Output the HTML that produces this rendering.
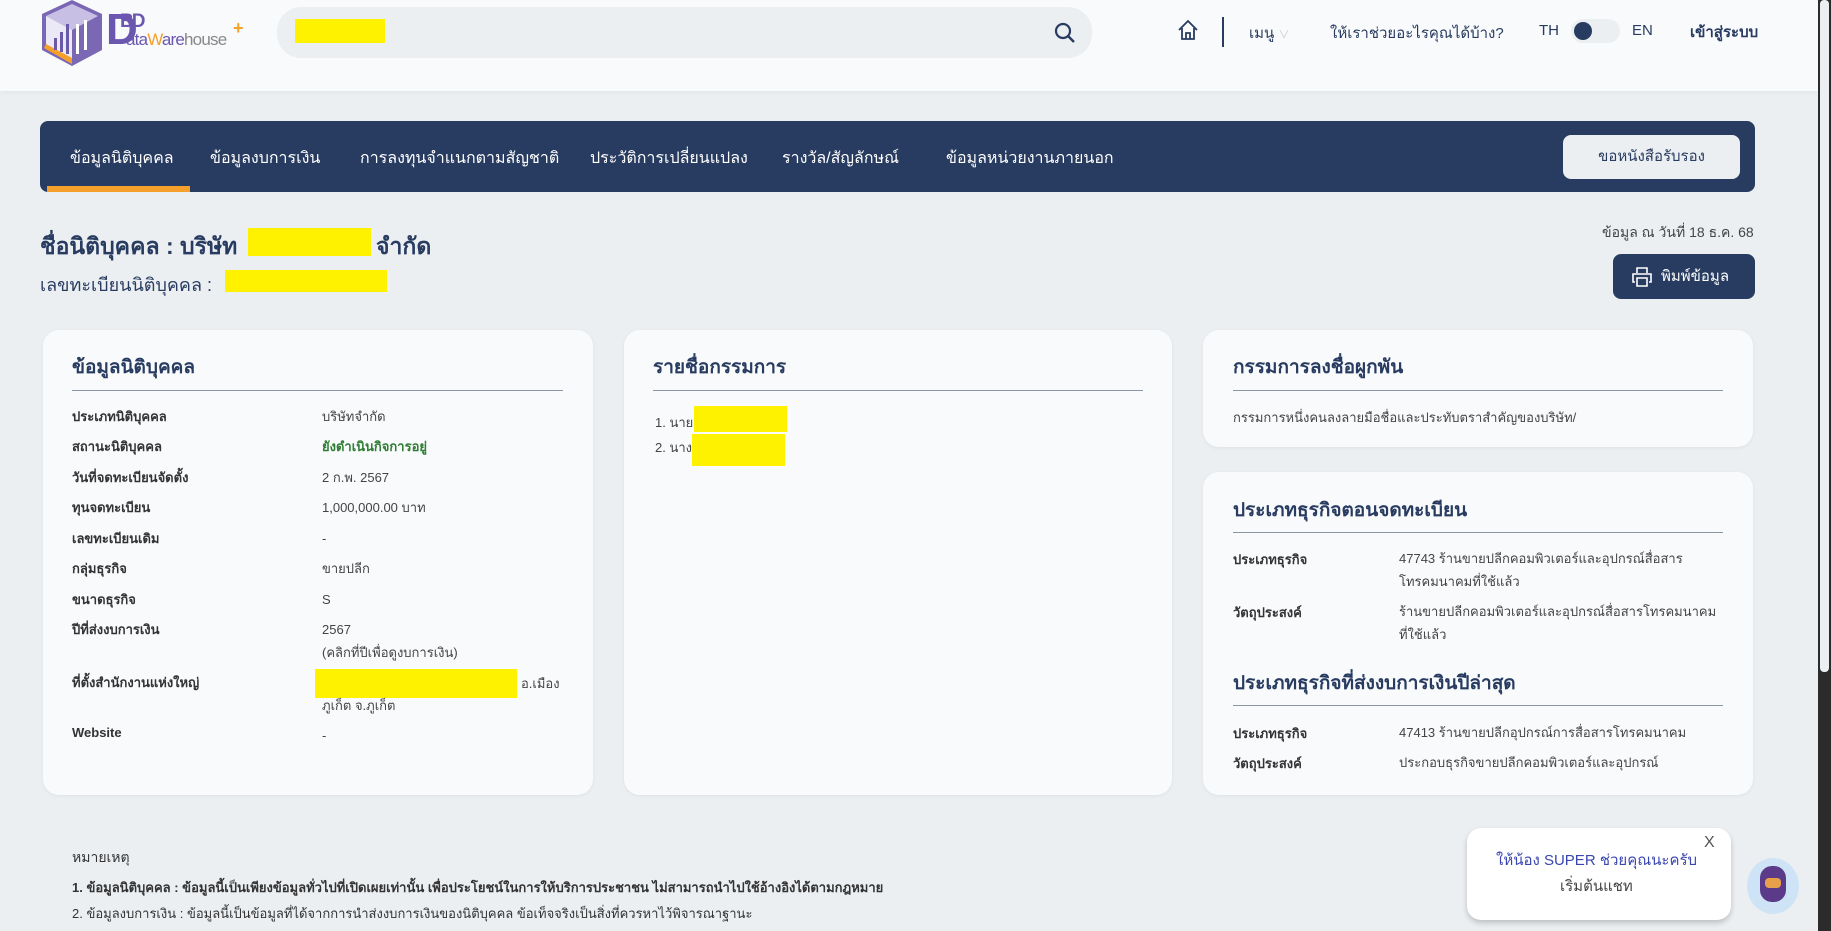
<!DOCTYPE html>
<html><head><meta charset="utf-8"><style>
*{box-sizing:border-box;margin:0;padding:0}
body{width:1831px;height:931px;overflow:hidden;background:#eceff2;font-family:"Liberation Sans","Noto Sans CJK SC",sans-serif;color:#283b60;position:relative}
.abs{position:absolute;white-space:nowrap}
.hdr{position:absolute;left:0;top:0;width:1818px;height:91px;background:#f8fafc;box-shadow:0 2px 6px rgba(0,0,0,.04)}
.y{position:absolute;background:#fff200}
.nav{position:absolute;left:40px;top:121px;width:1715px;height:71px;background:#283b60;border-radius:8px}
.nav span{position:absolute;top:25px;color:#fff;font-size:16px}
.card{position:absolute;background:#f8fafc;border-radius:16px;box-shadow:0 1px 4px rgba(0,0,0,.06)}
.ct{position:absolute;font-size:19px;font-weight:bold;color:#283b60}
.ln{position:absolute;height:1px;background:#8a96a8}
.lb{position:absolute;font-size:13px;font-weight:bold;color:#333;white-space:nowrap}
.vl{position:absolute;font-size:13px;color:#444;line-height:23px}
</style></head><body>
<div class="hdr"></div>
<svg class="abs" style="left:40px;top:0" width="64" height="68" viewBox="0 0 64 68">
<polygon points="32,0 62,14 62,50 32,66 2,50 2,14" fill="#7a68b5"/>
<polygon points="32,4 58,16 32,30 6,16" fill="#c8c0e4"/>
<polygon points="6,16 32,30 32,62 6,48" fill="#ece9f6"/>
<polygon points="6,44 32,58 32,64 4,48" fill="#f5a02a"/>
<rect x="14" y="38" width="3" height="12" fill="#6a58a8"/><rect x="20" y="32" width="3" height="20" fill="#6a58a8"/><rect x="26" y="24" width="3" height="30" fill="#6a58a8"/><rect x="36" y="24" width="3" height="30" fill="#fff"/><rect x="44" y="20" width="3" height="30" fill="#fff"/>
</svg>
<div class="abs" style="left:106px;top:8px;font-size:44px;line-height:44px;color:#6b56b0;font-weight:bold">D</div>
<div class="abs" style="left:120px;top:12px;font-size:19px;line-height:20px;color:#6b56b0;font-weight:bold;letter-spacing:-2px">BD</div>
<div class="abs" style="left:126px;top:30px;font-size:17px;line-height:20px;color:#6b56b0;letter-spacing:-.8px">ata<span style="color:#f5a02a">W</span>are<span style="color:#888">house</span></div>
<div class="abs" style="left:233px;top:18px;font-size:18px;color:#f5a02a;font-weight:bold">+</div>
<div class="abs" style="left:277px;top:7px;width:815px;height:51px;background:#eceff2;border-radius:24px"></div>
<div class="y" style="left:295px;top:19px;width:90px;height:24px"></div>
<svg class="abs" style="left:1054px;top:22px" width="22" height="22" viewBox="0 0 22 22"><circle cx="9" cy="9" r="7" fill="none" stroke="#283b60" stroke-width="2.2"/><path d="M14 14l6 6" stroke="#283b60" stroke-width="2.4"/></svg>
<svg class="abs" style="left:1177px;top:19px" width="22" height="22" viewBox="0 0 22 22"><path d="M2 11L11 2l9 9M5 9v11h12V9M9 20v-6h4v6" fill="none" stroke="#283b60" stroke-width="1.8"/></svg>
<div class="abs" style="left:1222px;top:17px;width:2px;height:30px;background:#283b60"></div>
<div class="abs" style="left:1249px;top:21px;font-size:15px">เมนู <span style="color:#ccc;font-size:11px">∨</span></div>
<div class="abs" style="left:1330px;top:21px;font-size:15px">ให้เราช่วยอะไรคุณได้บ้าง?</div>
<div class="abs" style="left:1539px;top:22px;font-size:15px">TH</div>
<div class="abs" style="left:1571px;top:19px;width:49px;height:24px;background:#eceff2;border-radius:12px"></div>
<div class="abs" style="left:1574px;top:22px;width:18px;height:18px;background:#283b60;border-radius:50%"></div>
<div class="abs" style="left:1632px;top:22px;font-size:15px">EN</div>
<div class="abs" style="left:1690px;top:20px;font-size:15px;font-weight:bold">เข้าสู่ระบบ</div>
<div class="nav">
<span style="left:30px">ข้อมูลนิติบุคคล</span><span style="left:170px">ข้อมูลงบการเงิน</span><span style="left:320px">การลงทุนจำแนกตามสัญชาติ</span><span style="left:550px">ประวัติการเปลี่ยนแปลง</span><span style="left:742px">รางวัล/สัญลักษณ์</span><span style="left:906px">ข้อมูลหน่วยงานภายนอก</span>
<div class="abs" style="left:7px;top:65px;width:143px;height:6px;background:#f5a02a"></div>
<div class="abs" style="left:1523px;top:14px;width:177px;height:44px;background:#eceff2;border-radius:8px;color:#283b60;font-size:15px;text-align:center;line-height:44px">ขอหนังสือรับรอง</div>
</div>
<div class="abs" style="left:40px;top:229px;font-size:23px;font-weight:bold">ชื่อนิติบุคคล : บริษัท</div>
<div class="y" style="left:248px;top:228px;width:123px;height:28px"></div>
<div class="abs" style="left:376px;top:229px;font-size:23px;font-weight:bold">จำกัด</div>
<div class="abs" style="left:40px;top:270px;font-size:18px">เลขทะเบียนนิติบุคคล :</div>
<div class="y" style="left:225px;top:270px;width:162px;height:22px"></div>
<div class="abs" style="left:1602px;top:222px;font-size:14px;color:#444">ข้อมูล ณ วันที่ 18 ธ.ค. 68</div>
<div class="abs" style="left:1613px;top:254px;width:142px;height:45px;background:#283b60;border-radius:8px;color:#fff;font-size:15px;line-height:45px;padding-left:48px">พิมพ์ข้อมูล</div>
<svg class="abs" style="left:1631px;top:266px" width="22" height="22" viewBox="0 0 22 22"><path d="M6 7V2h10v5M4 16H2V8h18v8h-2M6 12h10v8H6z" fill="none" stroke="#fff" stroke-width="1.6"/></svg>

<div class="card" style="left:43px;top:330px;width:550px;height:465px"></div>
<div class="ct" style="left:72px;top:352px">ข้อมูลนิติบุคคล</div>
<div class="ln" style="left:72px;top:390px;width:491px"></div>
<div class="lb" style="left:72px;top:406px">ประเภทนิติบุคคล</div><div class="vl" style="left:322px;top:405px">บริษัทจำกัด</div>
<div class="lb" style="left:72px;top:436px">สถานะนิติบุคคล</div><div class="vl" style="left:322px;top:435px;color:#2e7d32;font-weight:bold">ยังดำเนินกิจการอยู่</div>
<div class="lb" style="left:72px;top:467px">วันที่จดทะเบียนจัดตั้ง</div><div class="vl" style="left:322px;top:466px">2 ก.พ. 2567</div>
<div class="lb" style="left:72px;top:497px">ทุนจดทะเบียน</div><div class="vl" style="left:322px;top:496px">1,000,000.00 บาท</div>
<div class="lb" style="left:72px;top:528px">เลขทะเบียนเดิม</div><div class="vl" style="left:322px;top:527px">-</div>
<div class="lb" style="left:72px;top:558px">กลุ่มธุรกิจ</div><div class="vl" style="left:322px;top:557px">ขายปลีก</div>
<div class="lb" style="left:72px;top:589px">ขนาดธุรกิจ</div><div class="vl" style="left:322px;top:588px">S</div>
<div class="lb" style="left:72px;top:619px">ปีที่ส่งงบการเงิน</div><div class="vl" style="left:322px;top:618px">2567<br>(คลิกที่ปีเพื่อดูงบการเงิน)</div>
<div class="lb" style="left:72px;top:672px">ที่ตั้งสำนักงานแห่งใหญ่</div>
<div class="y" style="left:315px;top:669px;width:202px;height:29px"></div>
<div class="vl" style="left:521px;top:672px">อ.เมือง</div><div class="vl" style="left:322px;top:694px">ภูเก็ต จ.ภูเก็ต</div>
<div class="lb" style="left:72px;top:725px">Website</div><div class="vl" style="left:322px;top:724px">-</div>

<div class="card" style="left:624px;top:330px;width:548px;height:465px"></div>
<div class="ct" style="left:653px;top:352px">รายชื่อกรรมการ</div>
<div class="ln" style="left:653px;top:390px;width:490px"></div>
<div class="vl" style="left:655px;top:411px">1. นาย</div><div class="y" style="left:694px;top:406px;width:93px;height:26px"></div>
<div class="vl" style="left:655px;top:436px">2. นาง</div><div class="y" style="left:692px;top:434px;width:93px;height:32px"></div>

<div class="card" style="left:1203px;top:330px;width:550px;height:117px"></div>
<div class="ct" style="left:1233px;top:352px">กรรมการลงชื่อผูกพัน</div>
<div class="ln" style="left:1233px;top:390px;width:490px"></div>
<div class="vl" style="left:1233px;top:406px">กรรมการหนึ่งคนลงลายมือชื่อและประทับตราสำคัญของบริษัท/</div>

<div class="card" style="left:1203px;top:472px;width:550px;height:323px"></div>
<div class="ct" style="left:1233px;top:495px">ประเภทธุรกิจตอนจดทะเบียน</div>
<div class="ln" style="left:1233px;top:532px;width:490px"></div>
<div class="lb" style="left:1233px;top:549px">ประเภทธุรกิจ</div><div class="vl" style="left:1399px;top:547px">47743 ร้านขายปลีกคอมพิวเตอร์และอุปกรณ์สื่อสาร<br>โทรคมนาคมที่ใช้แล้ว</div>
<div class="lb" style="left:1233px;top:602px">วัตถุประสงค์</div><div class="vl" style="left:1399px;top:600px">ร้านขายปลีกคอมพิวเตอร์และอุปกรณ์สื่อสารโทรคมนาคม<br>ที่ใช้แล้ว</div>
<div class="ct" style="left:1233px;top:668px">ประเภทธุรกิจที่ส่งงบการเงินปีล่าสุด</div>
<div class="ln" style="left:1233px;top:705px;width:490px"></div>
<div class="lb" style="left:1233px;top:723px">ประเภทธุรกิจ</div><div class="vl" style="left:1399px;top:721px">47413 ร้านขายปลีกอุปกรณ์การสื่อสารโทรคมนาคม</div>
<div class="lb" style="left:1233px;top:753px">วัตถุประสงค์</div><div class="vl" style="left:1399px;top:751px">ประกอบธุรกิจขายปลีกคอมพิวเตอร์และอุปกรณ์</div>

<div class="abs" style="left:72px;top:847px;font-size:14px;color:#333">หมายเหตุ</div>
<div class="abs" style="left:72px;top:877px;font-size:13px;color:#333;font-weight:bold">1. ข้อมูลนิติบุคคล : ข้อมูลนี้เป็นเพียงข้อมูลทั่วไปที่เปิดเผยเท่านั้น เพื่อประโยชน์ในการให้บริการประชาชน ไม่สามารถนำไปใช้อ้างอิงได้ตามกฎหมาย</div>
<div class="abs" style="left:72px;top:903px;font-size:13px;color:#333">2. ข้อมูลงบการเงิน : ข้อมูลนี้เป็นข้อมูลที่ได้จากการนำส่งงบการเงินของนิติบุคคล ข้อเท็จจริงเป็นสิ่งที่ควรหาไว้พิจารณาฐานะ</div>

<div class="abs" style="left:1467px;top:828px;width:264px;height:92px;background:#fff;border-radius:14px;box-shadow:0 3px 6px rgba(0,0,0,.2)"></div>
<div class="abs" style="left:1704px;top:834px;font-size:16px;color:#555">X</div>
<div class="abs" style="left:1496px;top:848px;font-size:15px;color:#3a46b0">ให้น้อง SUPER ช่วยคุณนะครับ</div>
<div class="abs" style="left:1560px;top:874px;font-size:15px;color:#444">เริ่มต้นแชท</div>
<div class="abs" style="left:1747px;top:858px;width:52px;height:56px;border-radius:50%;background:#cfe3f7"></div>
<div class="abs" style="left:1760px;top:866px;width:26px;height:36px;border-radius:12px;background:#5c3a8a"></div>
<div class="abs" style="left:1765px;top:878px;width:16px;height:10px;border-radius:4px;background:#e8a04a"></div>

<div class="abs" style="left:1818px;top:0;width:13px;height:931px;background:#2b2b2b"></div>
<div class="abs" style="left:1820px;top:0;width:9px;height:672px;background:#eceff2;border-radius:4px"></div>
</body></html>
